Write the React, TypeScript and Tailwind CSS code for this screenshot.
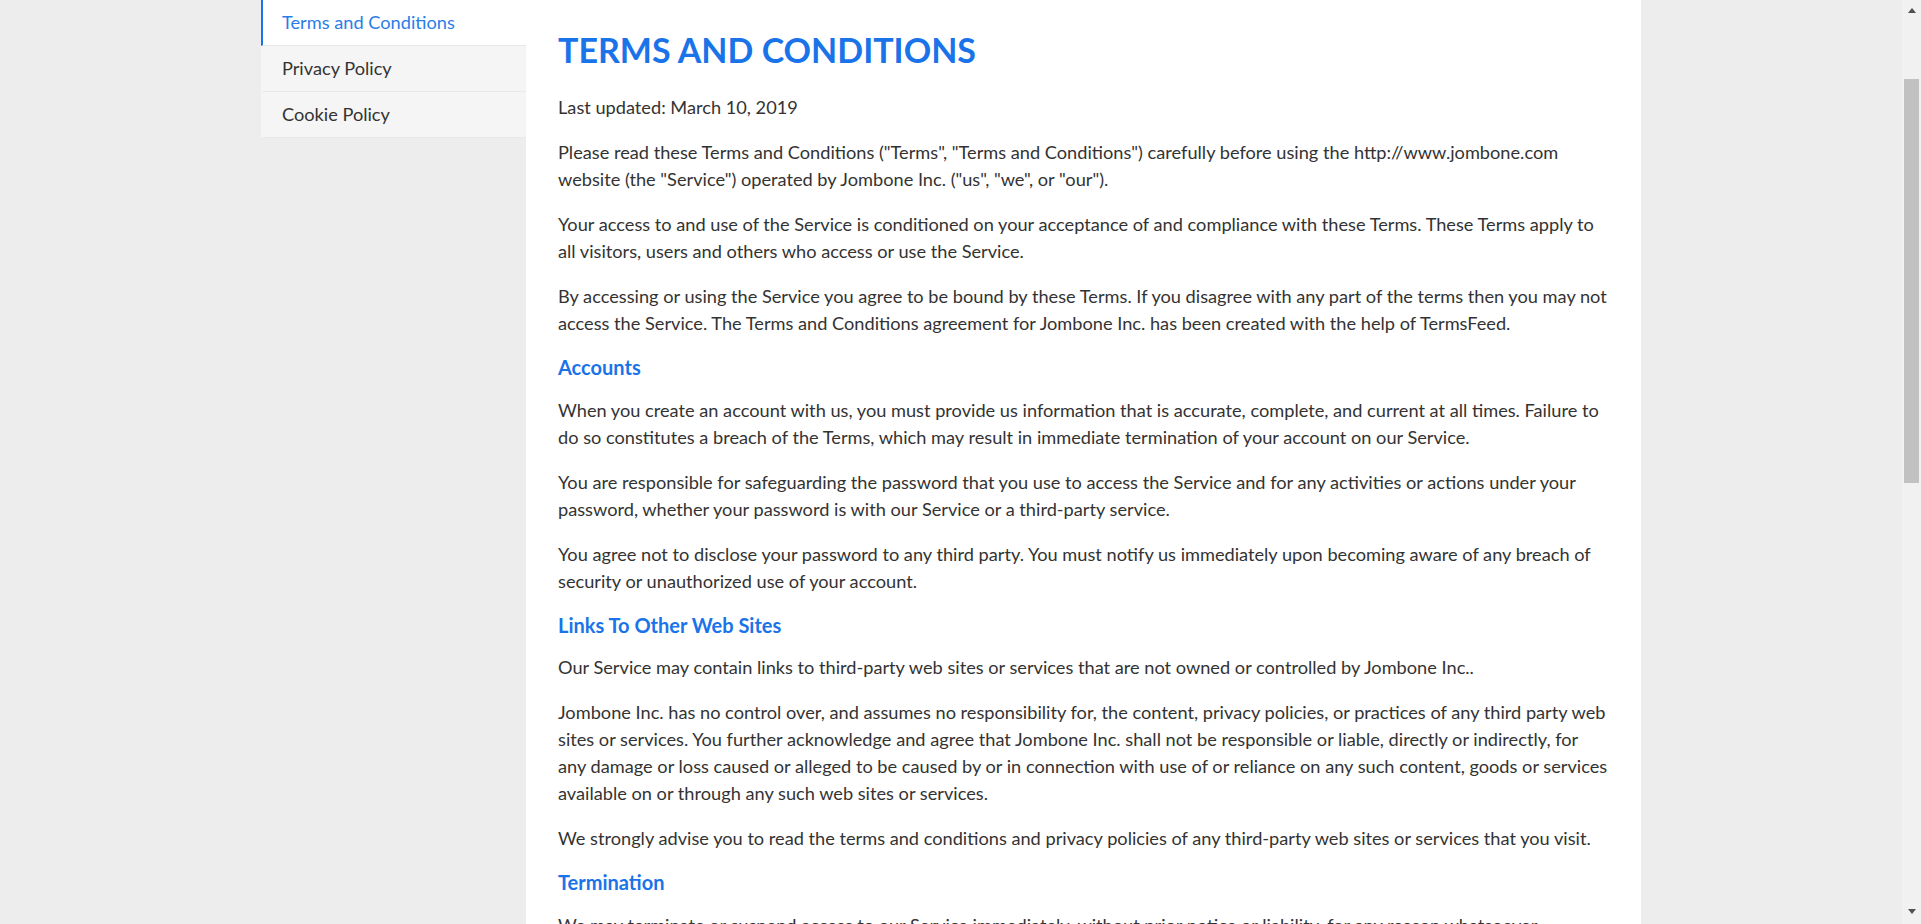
const sideLinks = [
  { label: "Terms and Conditions", active: true },
  { label: "Privacy Policy", active: false },
  { label: "Cookie Policy", active: false },
];

type Block = { type: "p" | "h"; text: string };

const blocks: Block[] = [
  { type: "p", text: "Last updated: March 10, 2019" },
  {
    type: "p",
    text: 'Please read these Terms and Conditions ("Terms", "Terms and Conditions") carefully before using the http://www.jombone.com website (the "Service") operated by Jombone Inc. ("us", "we", or "our").',
  },
  {
    type: "p",
    text: "Your access to and use of the Service is conditioned on your acceptance of and compliance with these Terms. These Terms apply to all visitors, users and others who access or use the Service.",
  },
  {
    type: "p",
    text: "By accessing or using the Service you agree to be bound by these Terms. If you disagree with any part of the terms then you may not access the Service. The Terms and Conditions agreement for Jombone Inc. has been created with the help of TermsFeed.",
  },
  { type: "h", text: "Accounts" },
  {
    type: "p",
    text: "When you create an account with us, you must provide us information that is accurate, complete, and current at all times. Failure to do so constitutes a breach of the Terms, which may result in immediate termination of your account on our Service.",
  },
  {
    type: "p",
    text: "You are responsible for safeguarding the password that you use to access the Service and for any activities or actions under your password, whether your password is with our Service or a third-party service.",
  },
  {
    type: "p",
    text: "You agree not to disclose your password to any third party. You must notify us immediately upon becoming aware of any breach of security or unauthorized use of your account.",
  },
  { type: "h", text: "Links To Other Web Sites" },
  {
    type: "p",
    text: "Our Service may contain links to third-party web sites or services that are not owned or controlled by Jombone Inc..",
  },
  {
    type: "p",
    text: "Jombone Inc. has no control over, and assumes no responsibility for, the content, privacy policies, or practices of any third party web sites or services. You further acknowledge and agree that Jombone Inc. shall not be responsible or liable, directly or indirectly, for any damage or loss caused or alleged to be caused by or in connection with use of or reliance on any such content, goods or services available on or through any such web sites or services.",
  },
  {
    type: "p",
    text: "We strongly advise you to read the terms and conditions and privacy policies of any third-party web sites or services that you visit.",
  },
  { type: "h", text: "Termination" },
  {
    type: "p",
    text: "We may terminate or suspend access to our Service immediately, without prior notice or liability, for any reason whatsoever, including without limitation if you breach the Terms.",
  },
  {
    type: "p",
    text: "All provisions of the Terms which by their nature should survive termination shall survive termination, including, without limitation, ownership provisions, warranty disclaimers, indemnity and limitations of liability.",
  },
];

const Scrollbar = () => {
  return (
    <div className="flex h-screen w-[19px] shrink-0 flex-col bg-[#f1f1f1]">
      <div className="flex h-[17px] items-center justify-center pt-[3px]">
        <div className="h-0 w-0 border-x-[4px] border-b-[5px] border-x-transparent border-b-[#505050]" />
      </div>
      <div className="flex-1 pt-[62px]">
        <div className="mx-auto h-[404px] w-[15px] bg-[#c1c1c1]" />
      </div>
      <div className="flex h-[17px] items-start justify-center pt-[2px]">
        <div className="h-0 w-0 border-x-[4px] border-t-[5px] border-x-transparent border-t-[#505050]" />
      </div>
    </div>
  );
};

export default function App() {
  return (
    <div className="flex h-screen overflow-hidden bg-[#ededed] font-['Lato','Noto_Sans',sans-serif] text-[#333]">
      <div className="flex-1 overflow-hidden">
        <div className="mx-auto flex max-w-[1380px] items-start">
          <aside className="w-[265px] shrink-0">
            {sideLinks.map((link) => (
              <a
                key={link.label}
                href="#"
                className={`flex h-[46px] items-center border-b border-l-2 border-b-[#e8e8e8] pl-[19px] text-[18.2px] leading-[27px] ${
                  link.active
                    ? "border-l-[#1a73e8] bg-white text-[#2a7de9]"
                    : "border-l-transparent bg-[#f5f5f5] text-[#333]"
                }`}
              >
                {link.label}
              </a>
            ))}
          </aside>
          <main className="min-h-screen flex-1 bg-white px-8 pt-[29px] pb-10">
            <h1 className="mb-[23px] text-[34px] font-bold leading-[42px] text-[#1a73e8]">
              TERMS AND CONDITIONS
            </h1>
            {blocks.map((b, i) =>
              b.type === "h" ? (
                <h2
                  key={i}
                  className="mb-[17.5px] text-[20px] font-bold leading-[24px] text-[#1a73e8]"
                >
                  {b.text}
                </h2>
              ) : (
                <p key={i} className="mb-[18px] text-[18.2px] leading-[27px]">
                  {b.text}
                </p>
              )
            )}
          </main>
        </div>
      </div>
      <Scrollbar />
    </div>
  );
}
